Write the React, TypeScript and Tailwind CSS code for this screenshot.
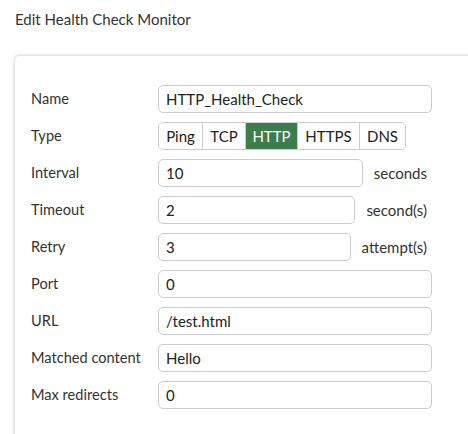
import React from "react";

const rowLabel = "w-[127px] shrink-0 text-[14.6px] leading-[20px]";
const inputCls =
  "h-[28px] rounded-[5px] border border-[#cccccc] bg-white pl-[7px] flex items-center text-[15px] text-[#222]";

function TextRow({ label, value, unit }: { label: string; value: string; unit?: string }) {
  return (
    <div className="flex items-center h-[28px]">
      <div className={rowLabel}>{label}</div>
      <div className="flex items-center w-[274px]">
        <div className={inputCls + " flex-1"}>{value}</div>
        {unit && <div className="pl-[11px] pr-[5px] text-[15px] whitespace-nowrap">{unit}</div>}
      </div>
    </div>
  );
}

export default function App() {
  const types = [
    { t: "Ping", w: "w-[44px]" },
    { t: "TCP", w: "w-[43px]" },
    { t: "HTTP", w: "w-[52px]", active: true },
    { t: "HTTPS", w: "w-[62px]" },
    { t: "DNS", w: "w-[45px]" },
  ];
  return (
    <div className="w-[468px] h-[434px] overflow-hidden bg-white text-[#333] font-['Lato',sans-serif]">
      <div className="pl-[15px] pt-[9px] h-[55px] text-[15px] leading-[20px]">Edit Health Check Monitor</div>
      <div className="ml-[14px] w-[490px] h-[420px] rounded-[6px] border border-[#e6e6e6] shadow-[0_0_3px_rgba(0,0,0,0.18)] pt-[29px] pl-[16px]">
        <div className="flex flex-col gap-[9px]">
          <TextRow label="Name" value="HTTP_Health_Check" />
          <div className="flex items-center h-[28px]">
            <div className={rowLabel}>Type</div>
            <div className="flex h-[28px] rounded-[5px] border border-[#cccccc] overflow-hidden text-[15px]">
              {types.map((x, i) => (
                <div
                  key={x.t}
                  className={
                    x.w +
                    " flex items-center justify-center " +
                    (i < types.length - 1 ? "border-r border-[#cccccc] " : "") +
                    (x.active ? "bg-[#3d7d4c] text-white" : "bg-white text-[#222]")
                  }
                >
                  {x.t}
                </div>
              ))}
            </div>
          </div>
          <TextRow label="Interval" value="10" unit="seconds" />
          <TextRow label="Timeout" value="2" unit="second(s)" />
          <TextRow label="Retry" value="3" unit="attempt(s)" />
          <TextRow label="Port" value="0" />
          <TextRow label="URL" value="/test.html" />
          <TextRow label="Matched content" value="Hello" />
          <TextRow label="Max redirects" value="0" />
        </div>
      </div>
    </div>
  );
}
